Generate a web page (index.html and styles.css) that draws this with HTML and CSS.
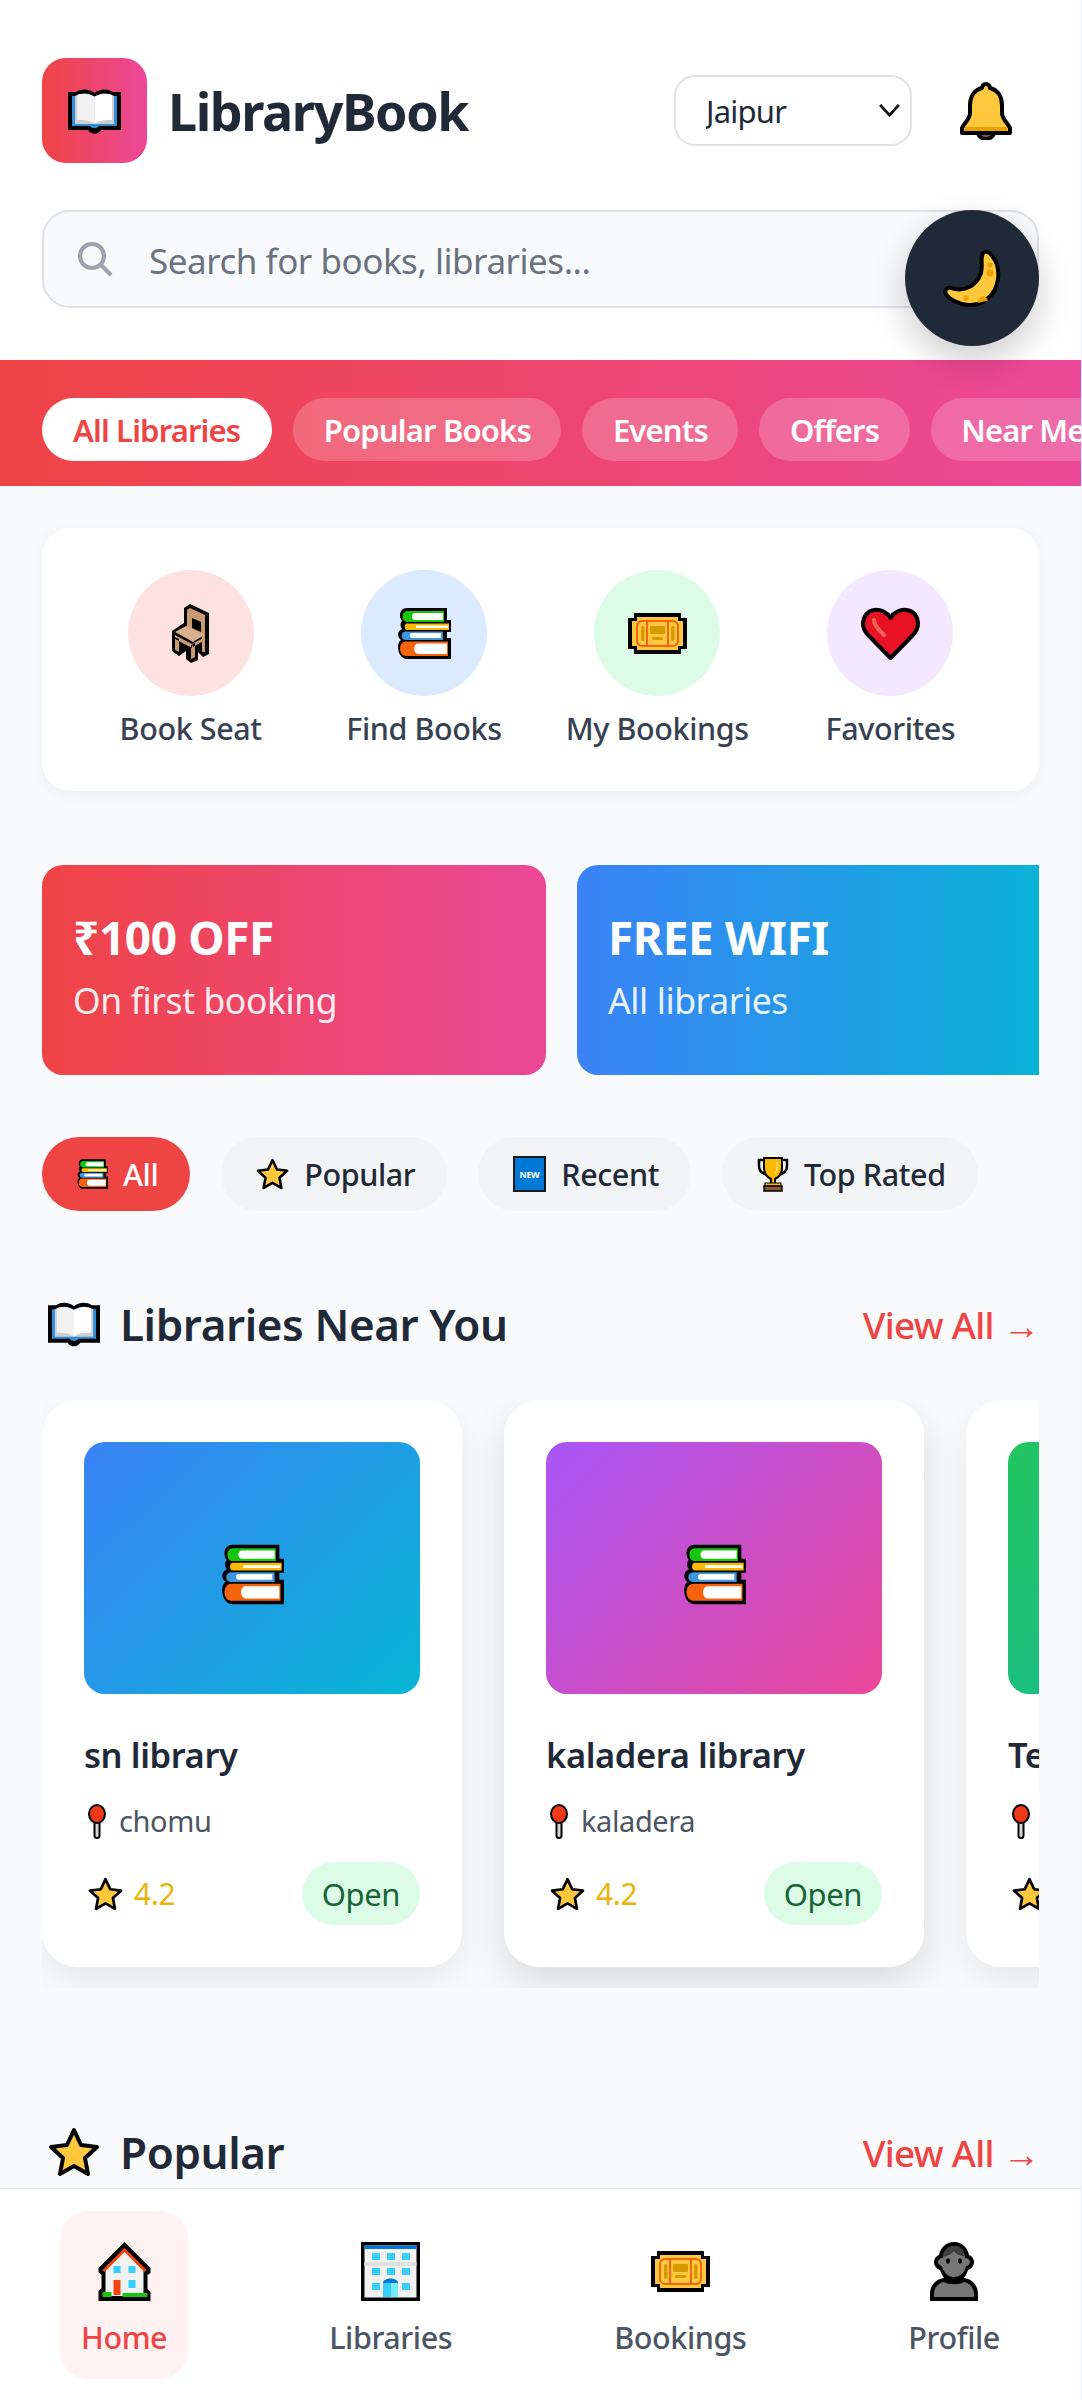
FILE: index.html
```html
<!DOCTYPE html>
<html lang="en">
<head>
<meta charset="utf-8">
<title>LibraryBook</title>
<link rel="stylesheet" href="styles.css">
</head>
<body>
<svg class="defs" aria-hidden="true">
  <symbol id="i-book" viewBox="0 0 53 46">
    <path fill="#000" d="M0 4H8C14 0 22 1 26.500 5C31 1 39 0 45 4H53V42H33C30 47 23 47 20 42H0Z"/>
    <path fill="#2f8ed8" d="M4 8H49V38H31C29 41 24 41 22 38H4Z"/>
    <path fill="#cfcfcf" d="M7 8C14 4 22 5 26.500 9V36H7Z"/>
    <path fill="#cfcfcf" d="M46 8C39 4 31 5 26.500 9V36H46Z"/>
    <path fill="#f2f2f2" d="M9 7C15 5 22 6 26.500 9V36C22 32 15 32 9 32Z"/>
    <path fill="#fff" d="M44 7C38 5 31 6 26.500 9V36C31 32 38 32 44 32Z"/>
  </symbol>
  <symbol id="i-bell" viewBox="0 0 52 58">
    <path fill="#8e562e" stroke="#000" stroke-width="4" d="M18 50a8 7 0 0 0 16 0Z"/>
    <path fill="#ffc83d" stroke="#000" stroke-width="4" stroke-linejoin="round" d="M26 2C28.500 2 30 4 30 6C38 8 42 15 42 23V31C42 37 47 40 50 46V51H2V46C5 40 10 37 10 31V23C10 15 14 8 22 6C22 4 23.500 2 26 2Z"/>
    <path fill="#eaa300" d="M5 45H47V49H5Z"/>
  </symbol>
  <symbol id="i-moon" viewBox="0 0 58 59">
    <path fill="#ffc83d" stroke="#000" stroke-width="4" stroke-linejoin="round" d="M40 4C44 1 47 4 49 7C55 14 56 22 55 30C53 46 40 57 25 56C15 55 6 50 3 45C1 41 4 38 8 39C20 43 33 38 38 24C40 17 37 9 40 4Z"/>
    <g fill="#eaa300"><circle cx="47" cy="16" r="2.500"/><circle cx="47" cy="24" r="3.500"/><circle cx="23" cy="49" r="2.700"/><path d="M35 54a5 5 0 0 1 10-2.500Z"/></g>
  </symbol>
  <symbol id="i-chair" viewBox="0 0 39 59">
    <path fill="#000" d="M13 4L19 0L38 9V50L32 53L27 48V56L20 59L15 55V47L8 52L1 47V27L13 19Z"/>
    <path fill="#c99a72" d="M16 6L19 4L34 11V48H31V33L16 26Z"/>
    <path fill="#000" d="M21 14L30 18V28L21 24Z"/>
    <path fill="#dab08c" d="M4 28L15 22L33 31L22 38Z"/>
    <path fill="#c99a72" d="M4 31L21 40V44L4 35ZM4 33V46L8 48V35ZM20 41V55L24 53V39ZM21 40L34 33V36L22 43Z"/>
  </symbol>
  <symbol id="i-books" viewBox="0 0 54 51">
    <path fill="#000" d="M10 0H50V12H54V24H50V30H54V51H10C0 51 -1 34 4 32C0 29 0 23 5 21C3 18 3 15 5 13C1 8 3 0 10 0Z"/>
    <path fill="#16c60c" d="M10 3H47V14H10C4 14 4 3 10 3Z"/>
    <path fill="#fff" d="M18 5H46V12H18C14 12 14 5 18 5Z"/>
    <path fill="#fcb900" d="M10 15.500H52V22H10C7 22 7 15.500 10 15.500Z"/>
    <path fill="#fff" d="M19 17.500H51V20H19Z"/>
    <path fill="#3a96dd" d="M9 23.500H46V32H9C3 32 3 23.500 9 23.500Z"/>
    <path fill="#fff" d="M15 25H44V30H15C12 30 12 25 15 25Z"/>
    <path fill="#f7630c" d="M9 33.500H51V48H9C1 48 1 33.500 9 33.500Z"/>
    <path fill="#fff" d="M21 35.500H50V46H21C16 46 16 35.500 21 35.500Z"/>
  </symbol>
  <symbol id="i-ticket" viewBox="0 0 59 41">
    <path fill="#000" d="M6 0H53V5H59V36H53V41H6V36H0V5H6Z"/>
    <path fill="#ffc83d" d="M9 4H50V8H55V33H50V37H9V33H4V8H9Z"/>
    <rect x="9" y="8" width="41" height="25" rx="5" fill="none" stroke="#f7430c" stroke-width="1.500"/>
    <path stroke="#f7430c" stroke-width="1.500" d="M19 8V33M40 8V33"/>
    <g fill="#d69b00"><rect x="13" y="13" width="3.500" height="15" rx="1.700"/><rect x="43" y="13" width="3.500" height="15" rx="1.700"/><rect x="22" y="13" width="15" height="8" rx="1"/><rect x="24" y="24" width="11" height="3" rx="1.500"/></g>
  </symbol>
  <symbol id="i-heart" viewBox="0 0 59 53">
    <path fill="#e81224" stroke="#000" stroke-width="4" stroke-linejoin="round" d="M29.500 11C26 5 19 2 13 3C6 4 2 10 2 17C2 22 5 26 8 29L29.500 51L51 29C54 26 57 22 57 17C57 10 53 4 46 3C40 2 33 5 29.500 11Z"/>
    <path fill="none" stroke="#f4645a" stroke-width="4" stroke-linecap="round" d="M13 13C13 18 17 22 23 28"/>
  </symbol>
  <symbol id="i-star" viewBox="0 0 52 50">
    <path fill="#ffc83d" stroke="#000" stroke-width="4" stroke-linejoin="round" d="M26 3L33 18L49 20L37 31L40 47L26 39L12 47L15 31L3 20L19 18Z"/>
  </symbol>
  <symbol id="i-new" viewBox="0 0 33 36">
    <rect width="33" height="36" fill="#1a1a1a"/>
    <rect x="2" y="2" width="29" height="32" fill="#0078d7"/>
    <text x="16.500" y="21.500" text-anchor="middle" class="new-text">NEW</text>
  </symbol>
  <symbol id="i-trophy" viewBox="0 0 32 36">
    <path fill="none" stroke="#000" stroke-width="2.500" d="M8 4H2V10C2 15 6 18 11 19M24 4H30V10C30 15 26 18 21 19"/>
    <path fill="#fcb900" stroke="#000" stroke-width="2" d="M7 2H25V12C25 19 20 22 18 23V28H14V23C12 22 7 19 7 12Z"/>
    <path fill="none" stroke="#ffdf7f" stroke-width="1.500" d="M20 6V13C20 15 19 16 18 17"/>
    <rect x="8" y="27" width="16" height="3" fill="#fcb900" stroke="#000"/>
    <rect x="7" y="30" width="18" height="5" fill="#8e562e" stroke="#000" stroke-width="1.500"/>
  </symbol>
  <symbol id="i-pin" viewBox="0 0 18 35">
    <rect x="6.500" y="15" width="5" height="19" rx="2.500" fill="#d8d8d8" stroke="#000" stroke-width="2"/>
    <ellipse cx="9" cy="10" rx="8" ry="9" fill="#f03a17" stroke="#000" stroke-width="2"/>
  </symbol>
  <symbol id="i-house" viewBox="0 0 52 59">
    <path fill="#000" d="M26 0L52 26V31L49 33V47L52 50V59H0V49L3 46V33L0 30V26Z"/>
    <path fill="#f2f2f2" d="M7 28L26 9L45 28V54H7Z"/>
    <path fill="none" stroke="#f7430c" stroke-width="3" d="M5 29L26 8L47 29"/>
    <g fill="#35d0ff"><rect x="15" y="24" width="7" height="7"/><rect x="30" y="24" width="7" height="7"/><rect x="30" y="38" width="7" height="8"/></g>
    <rect x="15" y="38" width="7" height="15" fill="#f7430c"/>
    <path fill="#16c60c" d="M4 50H13V55H4ZM24 51H49V55H24Z"/>
  </symbol>
  <symbol id="i-building" viewBox="0 0 59 59">
    <rect width="59" height="59" fill="#000"/>
    <rect x="3.500" y="3.500" width="52" height="52" fill="#f2f2f2"/>
    <rect x="3.500" y="3.500" width="52" height="3.500" fill="#0078d7"/>
    <rect x="3.500" y="20" width="52" height="4" fill="#e0e0e0"/>
    <g fill="#35d0ff"><rect x="11" y="11" width="8" height="7"/><rect x="26" y="11" width="8" height="7"/><rect x="41" y="11" width="8" height="7"/><rect x="11" y="26" width="8" height="7"/><rect x="26" y="26" width="8" height="7"/><rect x="41" y="26" width="8" height="7"/><rect x="11" y="41" width="8" height="7"/><rect x="41" y="41" width="8" height="7"/><rect x="22" y="40" width="8" height="15"/></g>
    <rect x="30" y="40" width="7" height="15" fill="#73eeff"/>
    <path fill="#0078d7" d="M22 41C22 35 37 35 37 41Z"/>
  </symbol>
  <symbol id="i-person" viewBox="0 0 48 59">
    <path fill="#000" d="M24 0C33 0 38 7 39 13C42 14 44 17 44 20C44 24 41 27 38 28C37 31 36 33 34 36C43 37 48 44 48 52V59H0V52C0 44 5 37 14 36C12 33 11 31 10 28C7 27 4 24 4 20C4 17 6 14 9 13C10 7 15 0 24 0Z"/>
    <path fill="#767676" d="M24 4C31 4 35 10 35 16C38 16 40 18 40 20C40 22 38 24 36 24C35 30 30 35 24 35C18 35 13 30 12 24C10 24 8 22 8 20C8 18 10 16 13 16C13 10 17 4 24 4Z"/>
    <path fill="#3f3f3f" d="M24 4C31 4 35 9 35 14C30 14 26 12 24 9C22 12 18 14 13 15C13 9 17 4 24 4Z"/>
    <path fill="#767676" d="M14 40C8 41 4 46 4 52V55H44V52C44 46 40 41 34 40C30 43 18 43 14 40Z"/>
    <ellipse cx="18" cy="19" rx="2" ry="2.700" fill="#000"/><ellipse cx="30" cy="19" rx="2" ry="2.700" fill="#000"/>
  </symbol>
</svg>

<header class="top">
  <div class="top-row">
    <div class="brand">
      <div class="logo"><svg class="ic ic-logo"><use href="#i-book"/></svg></div>
      <span class="brand-name">LibraryBook</span>
    </div>
    <div class="top-actions">
      <div class="city">
        <select class="city-select"><option>Jaipur</option><option>Delhi</option></select>
        <svg class="city-arrow" viewBox="0 0 24 16"><path d="M2 2L12 13L22 2" fill="none" stroke="#111" stroke-width="3"/></svg>
      </div>
      <button class="bell"><svg class="ic ic-bell"><use href="#i-bell"/></svg></button>
    </div>
  </div>
  <label class="search">
    <svg class="search-ic" viewBox="0 0 36 36"><circle cx="15" cy="15" r="12" fill="none" stroke="#9ca3af" stroke-width="4"/><path d="M24 24L34 34" stroke="#9ca3af" stroke-width="4"/></svg>
    <input class="search-input" type="text" placeholder="Search for books, libraries...">
  </label>
</header>

<button class="theme"><svg class="ic ic-moon"><use href="#i-moon"/></svg></button>

<nav class="banner">
  <a class="pill pill-on">All Libraries</a>
  <a class="pill">Popular Books</a>
  <a class="pill">Events</a>
  <a class="pill">Offers</a>
  <a class="pill">Near Me</a>
</nav>

<main class="main">
  <section class="quick">
    <a class="quick-item"><span class="disc disc-red"><svg class="ic ic-chair"><use href="#i-chair"/></svg></span><span class="quick-label">Book Seat</span></a>
    <a class="quick-item"><span class="disc disc-blue"><svg class="ic ic-books"><use href="#i-books"/></svg></span><span class="quick-label">Find Books</span></a>
    <a class="quick-item"><span class="disc disc-green"><svg class="ic ic-ticket"><use href="#i-ticket"/></svg></span><span class="quick-label">My Bookings</span></a>
    <a class="quick-item"><span class="disc disc-purple"><svg class="ic ic-heart"><use href="#i-heart"/></svg></span><span class="quick-label">Favorites</span></a>
  </section>

  <section class="promos">
    <article class="promo promo-red"><h3 class="promo-title">₹100 OFF</h3><p class="promo-sub">On first booking</p></article>
    <article class="promo promo-blue"><h3 class="promo-title">FREE WIFI</h3><p class="promo-sub">All libraries</p></article>
  </section>

  <section class="chips">
    <a class="chip chip-on"><svg class="ic ic-chip-books"><use href="#i-books"/></svg>All</a>
    <a class="chip"><svg class="ic ic-chip-star"><use href="#i-star"/></svg>Popular</a>
    <a class="chip"><svg class="ic ic-chip-new"><use href="#i-new"/></svg>Recent</a>
    <a class="chip"><svg class="ic ic-chip-trophy"><use href="#i-trophy"/></svg>Top Rated</a>
  </section>

  <div class="sec-head sec-near">
    <h2 class="sec-title"><svg class="ic ic-sec-book"><use href="#i-book"/></svg>Libraries Near You</h2>
    <a class="view-all">View All →</a>
  </div>

  <section class="cards">
    <article class="card">
      <div class="thumb thumb-blue"><svg class="ic ic-thumb"><use href="#i-books"/></svg></div>
      <h3 class="card-name">sn library</h3>
      <p class="card-loc"><svg class="ic ic-pin"><use href="#i-pin"/></svg>chomu</p>
      <div class="card-foot"><span class="rating"><svg class="ic ic-rate"><use href="#i-star"/></svg>4.2</span><span class="badge">Open</span></div>
    </article>
    <article class="card card-raised">
      <div class="thumb thumb-purple"><svg class="ic ic-thumb"><use href="#i-books"/></svg></div>
      <h3 class="card-name">kaladera library</h3>
      <p class="card-loc"><svg class="ic ic-pin"><use href="#i-pin"/></svg>kaladera</p>
      <div class="card-foot"><span class="rating"><svg class="ic ic-rate"><use href="#i-star"/></svg>4.2</span><span class="badge">Open</span></div>
    </article>
    <article class="card">
      <div class="thumb thumb-green"><svg class="ic ic-thumb"><use href="#i-books"/></svg></div>
      <h3 class="card-name">Test library</h3>
      <p class="card-loc"><svg class="ic ic-pin"><use href="#i-pin"/></svg>jaipur</p>
      <div class="card-foot"><span class="rating"><svg class="ic ic-rate"><use href="#i-star"/></svg>4.2</span><span class="badge">Open</span></div>
    </article>
  </section>

  <div class="sec-head sec-popular">
    <h2 class="sec-title"><svg class="ic ic-sec-star"><use href="#i-star"/></svg>Popular</h2>
    <a class="view-all">View All →</a>
  </div>
</main>

<footer class="tabs">
  <a class="tab tab-on"><svg class="ic ic-house"><use href="#i-house"/></svg><span>Home</span></a>
  <a class="tab"><svg class="ic ic-house"><use href="#i-building"/></svg><span>Libraries</span></a>
  <a class="tab"><svg class="ic ic-tab-ticket"><use href="#i-ticket"/></svg><span>Bookings</span></a>
  <a class="tab"><svg class="ic ic-person"><use href="#i-person"/></svg><span>Profile</span></a>
</footer>
</body>
</html>
```
FILE: styles.css
```css
* { box-sizing: border-box; margin: 0; padding: 0; }
html { height: 2400px; overflow: hidden; background: #eef0f8; }
body {
  width: 1081px;
  height: 2400px;
  overflow: hidden;
  background: #f9fafb;
  font-family: "Noto Sans", "Open Sans", sans-serif;
  color: #1f2937;
  letter-spacing: -0.025em;
}
a { text-decoration: none; color: inherit; }
button { border: 0; background: none; cursor: pointer; font: inherit; }
.defs { display: none; }
.new-text { font: 700 9px "Noto Sans", sans-serif; fill: #fff; }
.ic { display: block; flex: none; }

/* icon sizes */
.ic-logo { width: 53px; height: 46px; }
.ic-bell { width: 52px; height: 58px; }
.ic-moon { width: 58px; height: 59px; }
.ic-chair { width: 39px; height: 59px; }
.ic-books { width: 54px; height: 51px; }
.ic-ticket { width: 59px; height: 41px; }
.ic-heart { width: 59px; height: 53px; }
.ic-chip-books { width: 31px; height: 30px; }
.ic-chip-star { width: 33px; height: 32px; }
.ic-chip-new { width: 33px; height: 36px; }
.ic-chip-trophy { width: 32px; height: 36px; }
.ic-sec-book { width: 52px; height: 46px; }
.ic-sec-star { width: 52px; height: 50px; }
.ic-thumb { width: 63px; height: 61px; margin-top: 12px; }
.ic-pin { width: 18px; height: 35px; }
.ic-rate { width: 35px; height: 34px; }
.ic-house { width: 59px; height: 59px; }
.ic-tab-ticket { width: 59px; height: 59px; }
.ic-person { width: 48px; height: 59px; }

/* header */
.top { background: #fff; padding: 58px 42px 52px; }
.top-row { display: flex; align-items: center; justify-content: space-between; }
.brand { display: flex; align-items: center; gap: 21px; }
.logo {
  width: 105px; height: 105px; border-radius: 24px;
  display: flex; align-items: center; justify-content: center;
  background: linear-gradient(90deg, #ef4444, #ec4899);
}
.brand-name { font-size: 52px; font-weight: 700; color: #1f2937; letter-spacing: -0.027em; }
.top-actions { display: flex; align-items: center; gap: 22px; }
.city { position: relative; }
.city-select {
  display: block; width: 238px; height: 71px;
  appearance: none;
  padding-left: 30px;
  background: #fff;
  border: 2.500px solid #e0e2e8; border-radius: 21px;
  font: 400 31px "Noto Sans", sans-serif; letter-spacing: -0.025em; color: #1f2937;
}
.city-arrow { position: absolute; right: 11px; top: 28px; width: 23px; height: 15px; pointer-events: none; }
.bell { padding: 0 27px 0 26px; }
.search {
  display: flex; align-items: center; gap: 36px;
  height: 98px; margin-top: 47px; padding-left: 33px;
  background: #f9fafb;
  border: 2.500px solid #dfe1e7; border-radius: 28px;
}
.search-ic { width: 36px; height: 36px; flex: none; }
.search-input {
  flex: 1; min-width: 0; border: 0; outline: 0; background: none;
  padding-top: 3px;
  font: 400 35px "Noto Sans", sans-serif; letter-spacing: -0.0135em; color: #1f2937;
}
.search-input::placeholder { color: #6b7280; opacity: 1; }
.theme {
  position: fixed; top: 210px; right: 43px; z-index: 5;
  width: 134px; height: 136px; border-radius: 50%;
  display: flex; align-items: center; justify-content: center;
  background: #1f2937;
  box-shadow: 0 14px 35px rgba(0,0,0,.2);
}

/* banner */
.banner {
  display: flex; gap: 21px; overflow: hidden;
  padding: 38px 0 38px 42px; height: 126px;
  background: linear-gradient(90deg, #ef4444, #ec4899);
}
.pill {
  flex: none; height: 63px; padding: 0 30.500px;
  display: flex; align-items: center;
  border-radius: 32px;
  background: rgba(255,255,255,.2);
  color: #fff; font-size: 31px; font-weight: 600; letter-spacing: -0.027em;
}
.pill-on { background: #fff; color: #ef4444; padding: 0 32px 0 31px; }

/* main */
.main { padding: 42px 42px 0; }
.quick {
  display: grid; grid-template-columns: repeat(4, 1fr);
  height: 263px; padding: 42px 32px 0;
  background: #fff; border-radius: 28px;
  box-shadow: 0 3px 14px rgba(0,0,0,.05);
}
.quick-item { display: flex; flex-direction: column; align-items: center; }
.disc {
  width: 126px; height: 126px; border-radius: 50%;
  display: flex; align-items: center; justify-content: center;
}
.disc-red { background: #fee2e2; }
.disc-blue { background: #dbeafe; }
.disc-green { background: #dcfce7; }
.disc-purple { background: #f3e8ff; }
.quick-label { margin-top: 12px; font-size: 30.500px; line-height: 40px; font-weight: 500; color: #374151; white-space: nowrap; }

.promos { display: flex; gap: 31px; margin-top: 74px; overflow: hidden; }
.promo {
  flex: none; width: 504px; height: 210px; padding: 0 31px 10px;
  display: flex; flex-direction: column; justify-content: center;
  border-radius: 21px; color: #fff;
}
.promo-red { background: linear-gradient(90deg, #ef4444, #ec4899); }
.promo-blue { background: linear-gradient(90deg, #3b82f6, #06b6d4); }
.promo-title { font-size: 46px; line-height: 60px; font-weight: 700; }
.promo-sub { margin-top: 9px; font-size: 35.500px; line-height: 48px; opacity: .9; }

.chips { display: flex; gap: 31px; margin-top: 62px; }
.chip {
  height: 74px; padding: 0 32px 0 35px;
  display: flex; align-items: center; gap: 15px;
  border-radius: 37px; background: #f3f4f6;
  font-size: 30.500px; font-weight: 500; color: #1f2937;
}
.chip-on { background: #ef4444; color: #fff; }

.sec-head { display: flex; align-items: center; justify-content: space-between; height: 64px; }
.sec-near { margin-top: 81px; }
.sec-popular { margin-top: 132px; }
.sec-title { display: flex; align-items: center; gap: 20px; padding-left: 6px; font-size: 44px; font-weight: 600; color: #1f2937; }
.view-all { font-size: 37px; font-weight: 500; letter-spacing: -0.02em; color: #ef4444; }

.cards { display: flex; gap: 42px; margin-top: 44px; padding-bottom: 21px; overflow: hidden; }
.card {
  flex: none; width: 420px; height: 567px; padding: 42px;
  background: #fff; border-radius: 35px;
  box-shadow: 0 14px 35px rgba(0,0,0,.07);
}
.card-raised { box-shadow: 0 17px 42px rgba(0,0,0,.12); }
.thumb {
  height: 252px; border-radius: 21px;
  display: flex; align-items: center; justify-content: center;
}
.thumb-blue { background: linear-gradient(135deg, #3b82f6, #06b6d4); }
.thumb-purple { background: linear-gradient(135deg, #a855f7, #ec4899); }
.thumb-green { background: linear-gradient(135deg, #22c55e, #14b8a6); }
.card-name { margin-top: 37px; font-size: 34.500px; line-height: 48px; font-weight: 600; color: #1f2937; white-space: nowrap; }
.card-loc { display: flex; align-items: center; gap: 13px; margin-top: 22px; padding-left: 4px; font-size: 29px; line-height: 40px; color: #4b5563; }
.card-foot { display: flex; align-items: center; justify-content: space-between; margin-top: 21px; }
.rating { display: flex; align-items: center; gap: 11px; padding-left: 4px; font-size: 30px; color: #eab308; }
.badge {
  height: 63px; padding: 0 20px;
  display: flex; align-items: center;
  border-radius: 32px; background: #dcfce7; color: #166534; font-size: 31px;
}

/* bottom tabs */
.tabs {
  position: fixed; left: 0; right: 1px; bottom: 0; z-index: 4;
  height: 212px; padding-top: 22px;
  display: flex; justify-content: space-around; align-items: flex-start;
  background: #fff; border-top: 1.500px solid #e5e7eb;
}
.tab {
  height: 168px; padding: 31px 21px 0;
  display: flex; flex-direction: column; align-items: center;
  border-radius: 28px;
  font-size: 30.500px; font-weight: 500; color: #4b5563;
}
.tab span { margin-top: 15px; line-height: 42px; }
.tab-on { background: #fef2f2; color: #ef4444; }
```
